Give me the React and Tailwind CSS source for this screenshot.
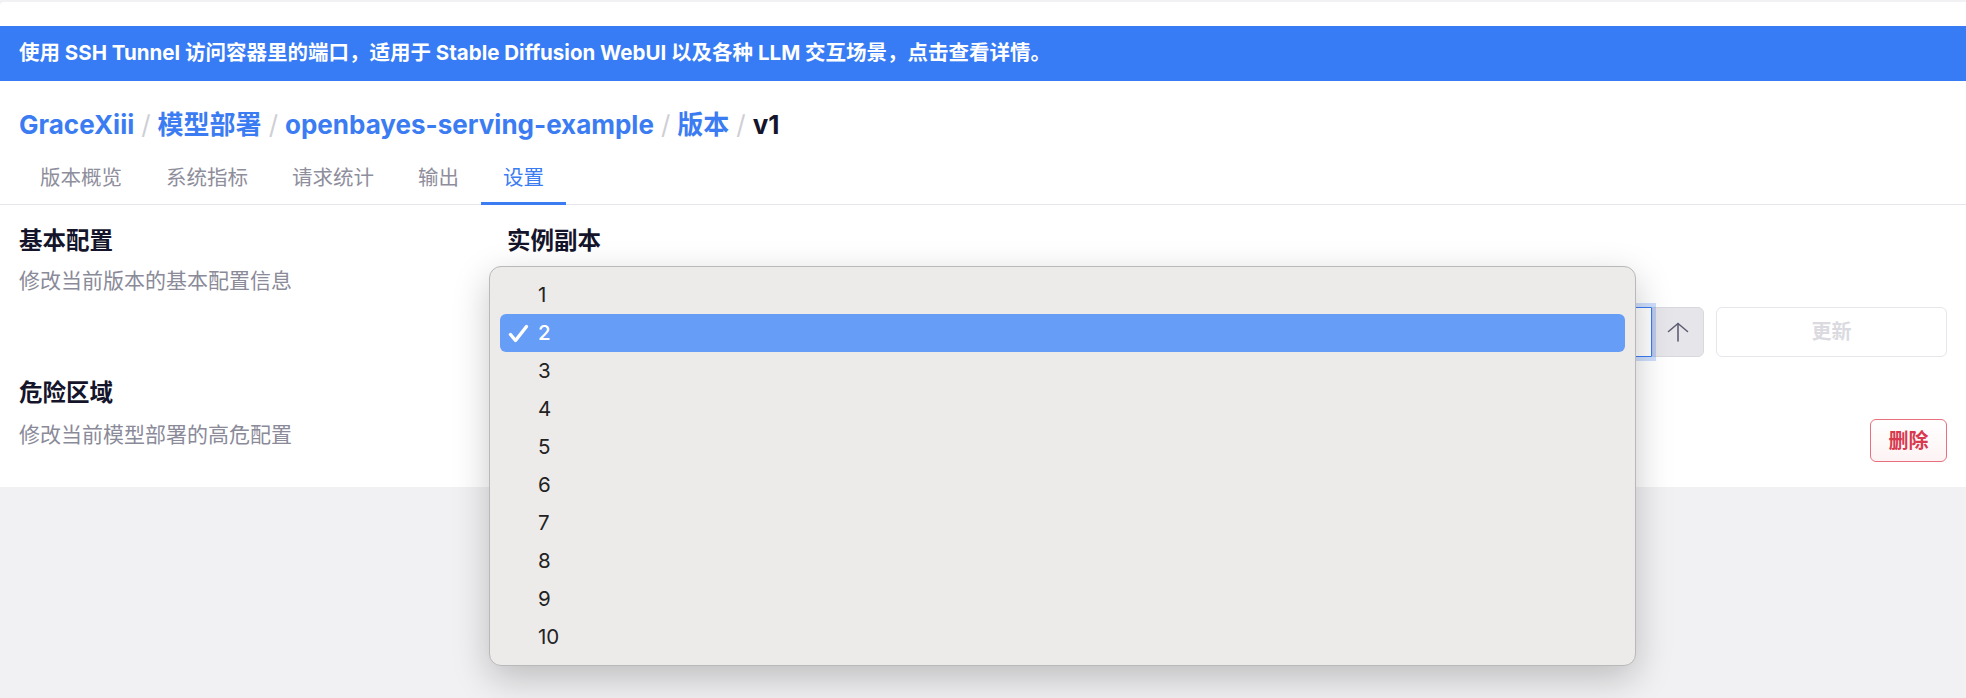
export default function App() {
  const items = [1, 2, 3, 4, 5, 6, 7, 8, 9, 10];
  return (
    <div className="relative min-h-[698px] w-full overflow-hidden bg-[#f1f1f3] pt-[2px] font-['Inter','Noto_Sans_CJK_SC',sans-serif]">
      <div className="h-[24px] rounded-tl-[4px] bg-white" />
      <div className="flex h-[55px] items-center bg-[#377bf5] px-[19px] text-[20.5px] font-bold text-white">
        使用 SSH Tunnel 访问容器里的端口，适用于 Stable Diffusion WebUI 以及各种 LLM 交互场景，点击查看详情。
      </div>
      <div className="bg-white">
        <div className="px-[19px] pt-[26px] text-[26px] font-bold leading-[36px] text-[#3b7cf2]">
          <span>GraceXiii</span>
          <span className="mx-[7px] font-normal text-[#cfcfd6]">/</span>
          <span>模型部署</span>
          <span className="mx-[7px] font-normal text-[#cfcfd6]">/</span>
          <span>openbayes-serving-example</span>
          <span className="mx-[7px] font-normal text-[#cfcfd6]">/</span>
          <span>版本</span>
          <span className="mx-[7px] font-normal text-[#cfcfd6]">/</span>
          <span className="text-[#14142b]">v1</span>
        </div>
        <div className="mt-[12px] flex border-b border-[#e6e6ea] px-[18px] text-[20.5px]">
          {["版本概览", "系统指标", "请求统计", "输出", "设置"].map((t) => (
            <div
              key={t}
              className={
                t === "设置"
                  ? "-mb-px flex h-[50px] items-center border-b-[3px] border-[#3b7cf2] px-[22px] text-[#3b7cf2]"
                  : "-mb-px flex h-[50px] items-center border-b-[3px] border-transparent px-[22px] text-[#8e8e9c]"
              }
            >
              {t}
            </div>
          ))}
        </div>

        <div className="flex pt-[20px]">
          <div className="w-[507px] shrink-0 pl-[19px]">
            <div className="text-[23.5px] font-bold leading-[32px] text-[#14142b]">基本配置</div>
            <div className="mt-[9px] text-[21px] leading-[30px] text-[#8a8a99]">修改当前版本的基本配置信息</div>
          </div>
          <div className="flex-1 pr-[19px]">
            <div className="text-[23.5px] font-bold leading-[32px] text-[#14142b]">实例副本</div>
            <div className="mt-[50px] flex items-center">
              <div className="relative z-10 h-[50px] flex-1 rounded-l-[6px] border border-[#3b7cf2] bg-white px-[14px] text-[20px] leading-[48px] text-[#14142b] shadow-[0_0_0_4px_rgba(59,124,242,0.25)]">
                2
              </div>
              <div className="flex h-[50px] w-[52px] items-center justify-center rounded-r-[6px] border border-[#d8d8de] bg-[#e5e5ea]">
                <svg width="22" height="20" viewBox="0 0 22 20" fill="none" stroke="#5f5f74" strokeWidth="1.6" strokeLinecap="round" strokeLinejoin="round">
                  <path d="M11 1.5V19" />
                  <path d="M1.5 9.5L11 1.5L20.5 9.5" />
                </svg>
              </div>
              <div className="ml-[12px] flex h-[50px] w-[231px] items-center justify-center rounded-[6px] border border-[#e6e6ec] bg-white text-[20px] font-bold text-[#dadae0]">
                更新
              </div>
            </div>
          </div>
        </div>

        <div className="flex pt-[20px] pb-[25px]">
          <div className="w-[507px] shrink-0 pl-[19px]">
            <div className="text-[23.5px] font-bold leading-[32px] text-[#14142b]">危险区域</div>
            <div className="mt-[11px] text-[21px] leading-[30px] text-[#8a8a99]">修改当前模型部署的高危配置</div>
          </div>
          <div className="flex flex-1 justify-end pr-[19px] pt-[42px]">
            <div className="flex h-[43px] w-[77px] items-center justify-center rounded-[6px] border border-[#e8707c] bg-gradient-to-b from-white to-[#fdf3f4] text-[20px] font-bold text-[#d8394f]">
              删除
            </div>
          </div>
        </div>
      </div>

      <div className="absolute left-[489px] top-[266px] z-30 h-[400px] w-[1147px] rounded-[12px] border border-[#b9b9b9] bg-[#ecebea] px-[10px] py-[9px] shadow-[0_12px_36px_rgba(0,0,0,0.22)]">
        {items.map((n) => (
          <div
            key={n}
            className={
              n === 2
                ? "relative flex h-[38px] items-center rounded-[6px] bg-[#669df6] pl-[38px] text-[20.5px] font-medium text-white"
                : "flex h-[38px] items-center pl-[38px] text-[20.5px] text-[#222222]"
            }
          >
            {n === 2 && (
              <svg className="absolute left-[8px] top-[10px]" width="21" height="19" viewBox="0 0 21 19" fill="none" stroke="white" strokeWidth="3.4" strokeLinecap="round" strokeLinejoin="round">
                <path d="M2.5 10.5L7.5 16.5L18.5 2.5" />
              </svg>
            )}
            {n}
          </div>
        ))}
      </div>
    </div>
  );
}
